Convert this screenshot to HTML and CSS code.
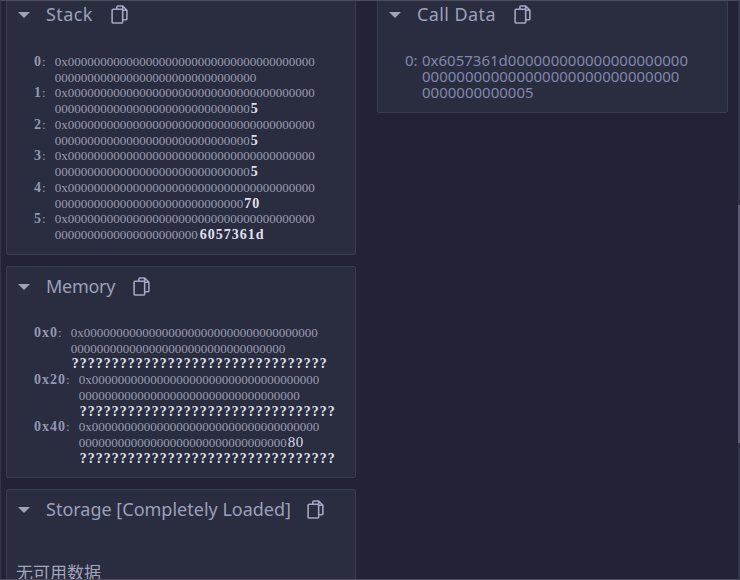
FILE: index.html
```html
<!DOCTYPE html>
<html lang="en">
<head>
<meta charset="utf-8">
<title>Debugger</title>
<link rel="stylesheet" href="styles.css">
</head>
<body>
<div class="layout">
  <div class="column col-left">
    <section class="card card-stack">
      <header class="card-head">
        <span class="caret"></span><h2 class="title">Stack</h2>
        <svg class="copy" viewBox="0 0 16 18"><path d="M5.5 3.5V2A1 1 0 0 1 6.5 1H11L15 5V13A1 1 0 0 1 14 14H11.5M11 1V5H15M2 4H10A1 1 0 0 1 11 5V16A1 1 0 0 1 10 17H2A1 1 0 0 1 1 16V5A1 1 0 0 1 2 4Z"/></svg>
      </header>
      <div class="rows rows-stack">
        <div class="row"><span class="key"><b>0</b>:</span><span class="val">0x000000000000000000000000000000000000000000000000000000000000000000000</span></div>
        <div class="row"><span class="key"><b>1</b>:</span><span class="val">0x00000000000000000000000000000000000000000000000000000000000000000000<b>5</b></span></div>
        <div class="row"><span class="key"><b>2</b>:</span><span class="val">0x00000000000000000000000000000000000000000000000000000000000000000000<b>5</b></span></div>
        <div class="row"><span class="key"><b>3</b>:</span><span class="val">0x00000000000000000000000000000000000000000000000000000000000000000000<b>5</b></span></div>
        <div class="row"><span class="key"><b>4</b>:</span><span class="val">0x0000000000000000000000000000000000000000000000000000000000000000000<b>70</b></span></div>
        <div class="row"><span class="key"><b>5</b>:</span><span class="val">0x000000000000000000000000000000000000000000000000000000000000<b class="wide">6057361d</b></span></div>
      </div>
    </section>
    <section class="card card-memory">
      <header class="card-head">
        <span class="caret"></span><h2 class="title">Memory</h2>
        <svg class="copy" viewBox="0 0 16 18"><path d="M5.5 3.5V2A1 1 0 0 1 6.5 1H11L15 5V13A1 1 0 0 1 14 14H11.5M11 1V5H15M2 4H10A1 1 0 0 1 11 5V16A1 1 0 0 1 10 17H2A1 1 0 0 1 1 16V5A1 1 0 0 1 2 4Z"/></svg>
      </header>
      <div class="rows rows-memory">
        <div class="row"><span class="key"><b>0x0</b>:</span><span class="val">0x000000000000000000000000000000000000000000000000000000000000000000000<br><b>????????????????????????????????</b></span></div>
        <div class="row"><span class="key"><b>0x20</b>:</span><span class="val">0x000000000000000000000000000000000000000000000000000000000000000000000<br><b>????????????????????????????????</b></span></div>
        <div class="row"><span class="key"><b>0x40</b>:</span><span class="val">0x0000000000000000000000000000000000000000000000000000000000000000000<b class="plain">80</b><br><b>????????????????????????????????</b></span></div>
      </div>
    </section>
    <section class="card card-storage">
      <header class="card-head">
        <span class="caret"></span><h2 class="title">Storage [Completely Loaded]</h2>
        <svg class="copy" viewBox="0 0 16 18"><path d="M5.5 3.5V2A1 1 0 0 1 6.5 1H11L15 5V13A1 1 0 0 1 14 14H11.5M11 1V5H15M2 4H10A1 1 0 0 1 11 5V16A1 1 0 0 1 10 17H2A1 1 0 0 1 1 16V5A1 1 0 0 1 2 4Z"/></svg>
      </header>
      <p class="empty">无可用数据</p>
    </section>
  </div>
  <div class="column col-right">
    <section class="card card-calldata">
      <header class="card-head">
        <span class="caret"></span><h2 class="title">Call Data</h2>
        <svg class="copy" viewBox="0 0 16 18"><path d="M5.5 3.5V2A1 1 0 0 1 6.5 1H11L15 5V13A1 1 0 0 1 14 14H11.5M11 1V5H15M2 4H10A1 1 0 0 1 11 5V16A1 1 0 0 1 10 17H2A1 1 0 0 1 1 16V5A1 1 0 0 1 2 4Z"/></svg>
      </header>
      <div class="call-row"><span class="call-key">0:</span><span class="call-val">0x6057361d000000000000000000000<br>000000000000000000000000000000<br>0000000000005</span></div>
    </section>
  </div>
</div>
<div class="scroll-thumb"></div>
</body>
</html>
```
FILE: styles.css
```css
html, body {
  margin: 0;
  padding: 0;
  width: 740px;
  height: 580px;
  overflow: hidden;
  background: #222336;
}
body { position: relative; }
.layout {
  display: flex;
  align-items: flex-start;
  gap: 21px;
  padding-left: 5px;
  height: 580px;
  box-sizing: border-box;
  overflow: hidden;
  border-left: 1px solid #33354a;
  border-top: 1px solid #4a4b5c;
  border-bottom: 1px solid #4a4b5c;
  border-right: 2px solid #33354a;
}
.scroll-thumb {
  position: absolute;
  top: 205px;
  right: 0;
  width: 2px;
  height: 238px;
  background: #5c5d74;
}
.column {
  display: flex;
  flex-direction: column;
  gap: 11px;
  margin-top: -6px;
}
.col-left { width: 350px; }
.col-right { width: 351px; }
.card {
  background: #2a2c3f;
  border: 1px solid #3a3c50;
  border-radius: 2px;
  box-sizing: border-box;
}
.card-stack { height: 260px; }
.card-memory { height: 212px; }
.card-storage { height: 120px; }
.card-calldata { height: 118px; }
.card-head {
  display: flex;
  align-items: center;
  height: 28px;
  padding-left: 11px;
  padding-top: 4px;
}
.card-memory .card-head, .card-storage .card-head { padding-top: 5px; }
.caret {
  width: 0;
  height: 0;
  border-left: 6px solid transparent;
  border-right: 6px solid transparent;
  border-top: 6px solid #a2a3b7;
  margin-top: 2px;
  margin-right: 16px;
}
.title {
  margin: 0;
  font: 400 18px/24px "Noto Sans", sans-serif;
  color: #9ba0bd;
}
.card-stack .title { letter-spacing: 0.4px; }
.card-memory .title { letter-spacing: -0.3px; }
.card-calldata .title { letter-spacing: 0.4px; }
.copy {
  width: 17px;
  height: 19px;
  margin-left: 18px;
  margin-top: 1px;
  fill: none;
  stroke: #a2a7c4;
  stroke-width: 1.5;
}
.card-storage .copy { margin-left: 16px; }
.rows {
  font: 400 13px/15.73px "Liberation Serif", serif;
  color: #9a9db3;
}
.rows-stack { padding: 26px 39px 0 27px; }
.rows-memory { padding: 25px 35px 0 27px; }
.row { display: flex; }
.key {
  flex: none;
  margin-right: 9px;
  color: #9a9db3;
}
.key b {
  font-weight: 700;
  font-size: 14px;
  line-height: 0;
  letter-spacing: 1px;
  color: #9297b3;
}
.val {
  flex: 1;
  min-width: 0;
  word-break: break-all;
  color: #9a9db3;
}
.val b {
  margin-left: 1px;
  color: #e0e1f0;
  font-weight: 700;
  font-size: 14px;
  line-height: 0;
  letter-spacing: 1px;
}
.val b.wide { margin-left: 2px; }
.val b.plain {
  color: #d8d9ea;
  font-weight: 400;
  font-size: 15px;
  letter-spacing: 0.5px;
}
.empty {
  margin: 37px 0 0 9px;
  font: 400 17px/24px "Noto Sans CJK SC", sans-serif;
  color: #a2a5bd;
}
.call-row {
  display: flex;
  padding: 24px 0 0 27px;
  font: 400 15px/16px "Noto Sans", sans-serif;
  color: #8089ab;
}
.call-key { flex: none; width: 17px; }
.call-val { flex: 1; min-width: 0; }
```
